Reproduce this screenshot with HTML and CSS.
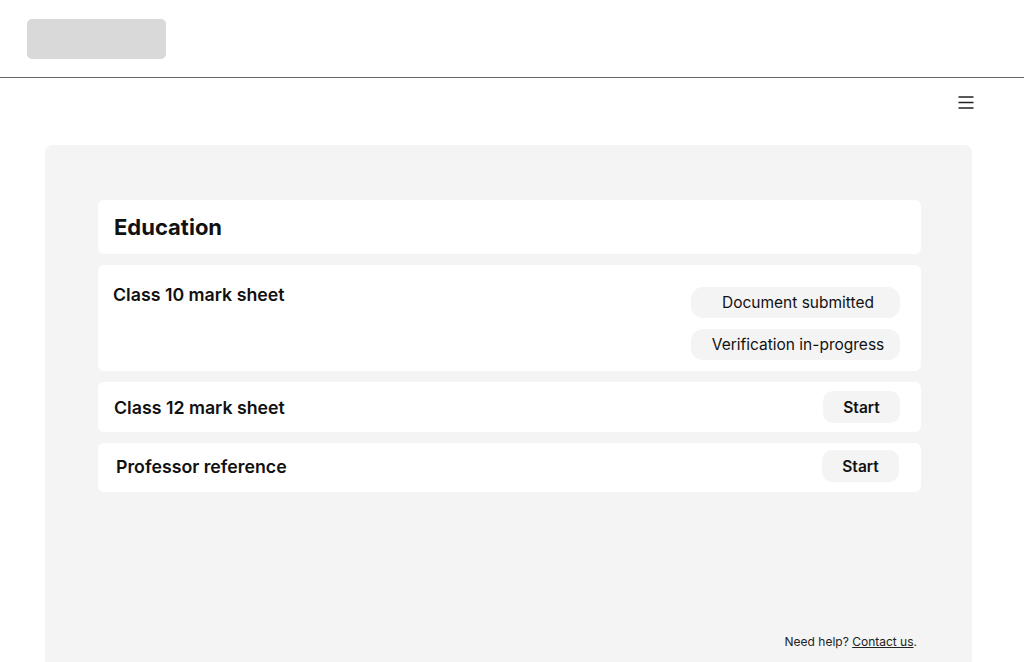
FILE: index.html
```html
<!DOCTYPE html>
<html>
<head>
    <title>Education</title>
    <link rel="stylesheet" href="styles.css">
</head>
<body>
    <header class="top-bar">
        <div class="logo"></div>
    </header>

    <div class="toolbar">
        <button class="menu-btn" aria-label="Menu">
            <svg width="16" height="13" viewBox="0 0 16 13">
                <path d="M0.5 1h15M0.5 6.5h15M0.5 12h15" stroke="#222" stroke-width="1.3" fill="none"/>
            </svg>
        </button>
    </div>

    <main class="panel">
        <div class="card section-title">
            <h1>Education</h1>
        </div>

        <div class="card item item-tall">
            <h2>Class 10 mark sheet</h2>
            <div class="status-list">
                <span class="pill">Document submitted</span>
                <span class="pill">Verification in-progress</span>
            </div>
        </div>

        <div class="card item">
            <h2>Class 12 mark sheet</h2>
            <button class="start-btn">Start</button>
        </div>

        <div class="card item item-raised">
            <h2 class="indent">Professor reference</h2>
            <button class="start-btn">Start</button>
        </div>

        <p class="help">Need help? <a href="#">Contact us</a>.</p>
    </main>
</body>
</html>
```

FILE: styles.css
```css
html, body {
    margin: 0;
    height: 662px;
    overflow: hidden;
}
body {
    font-family: Inter, "Noto Sans", sans-serif;
    color: #111;
    background: #fff;
}
.top-bar {
    height: 77px;
    border-bottom: 1px solid #666;
    box-sizing: content-box;
    display: flex;
    align-items: flex-start;
}
.logo {
    width: 139px;
    height: 40px;
    margin: 19px 0 0 27px;
    background: #d9d9d9;
    border-radius: 5px;
}
.toolbar {
    height: 67px;
    display: flex;
    justify-content: flex-end;
    align-items: flex-start;
    padding-right: 50px;
}
.menu-btn {
    margin-top: 18px;
    padding: 0;
    border: 0;
    background: none;
    cursor: pointer;
    line-height: 0;
}
.panel {
    margin: 0 52px 0 45px;
    height: 517px;
    box-sizing: border-box;
    padding: 55px 51px 0 53px;
    background: #f4f4f4;
    border-radius: 8px 8px 0 0;
    display: flex;
    flex-direction: column;
    gap: 11px;
}
.card {
    background: #fff;
    border-radius: 6px;
    display: flex;
    align-items: center;
    justify-content: space-between;
}
.section-title {
    height: 54px;
    padding: 0 16px;
}
.section-title h1 {
    margin: 0;
    font-size: 22px;
    font-weight: 700;
}
h2 {
    margin: 0;
    font-size: 17.75px;
    font-weight: 600;
}
.item {
    height: 50px;
    padding: 0 21px 0 16px;
}
.item h2.indent {
    margin-left: 2px;
}
/* last row sits a touch higher in its card */
.item-raised {
    height: 49px;
    padding-bottom: 3px;
    box-sizing: border-box;
    padding-right: 22px;
}
.item-tall {
    height: auto;
    align-items: flex-start;
    padding: 20px 21px 11px 15px;
}
.item-tall h2 {
    margin-top: -1px;
}
.status-list {
    width: 209px;
    display: flex;
    flex-direction: column;
    gap: 11px;
    margin-top: 2px;
}
.pill {
    height: 31px;
    box-sizing: border-box;
    padding-left: 5px;
    display: flex;
    align-items: center;
    justify-content: center;
    background: #f4f4f4;
    border-radius: 12px;
    font-size: 15.5px;
}
.start-btn {
    width: 77px;
    height: 32px;
    border: 0;
    border-radius: 10px;
    background: #f4f4f4;
    font-family: inherit;
    font-size: 15.5px;
    font-weight: 600;
    color: #111;
    cursor: pointer;
}
.help {
    margin: auto 4px 13px 0;
    text-align: right;
    font-size: 12px;
    color: #222;
}
.help a {
    color: #222;
}
```
